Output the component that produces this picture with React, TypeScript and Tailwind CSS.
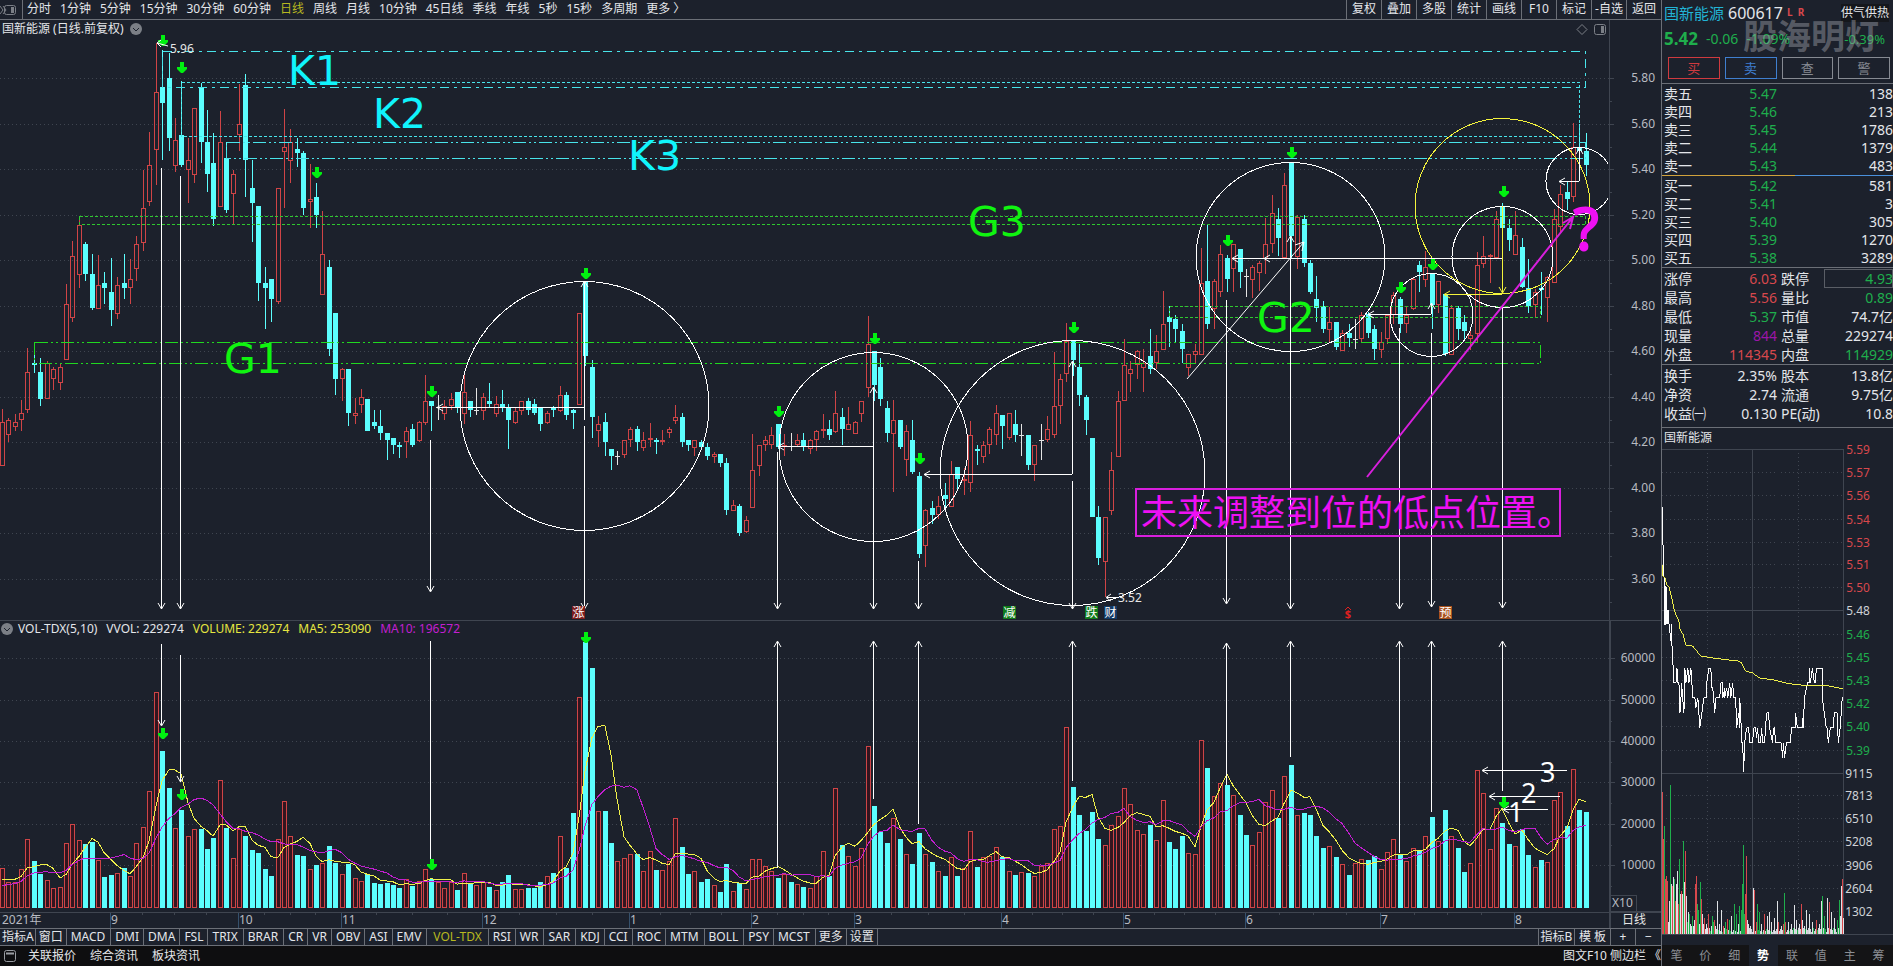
import React from "react";

/* One entry per trading day: kind, high, body top, body bottom, low, volume top.
   r = up, c = down, w / x = unchanged with an up / down volume bar. */
const DAYS = `
r409,422,466,466,868 r418,420,435,442,882 r414,422,427,431,882 r400,413,420,431,869 r348,372,410,413,839
c342,363,365,373,861 c358,372,399,406,874 r361,363,399,399,880 r367,369,379,390,888 r364,367,383,390,887
r284,304,360,360,843 r241,256,318,322,824 r217,225,275,288,840 c242,244,274,281,844 c254,274,308,310,842
r255,285,309,309,860 c272,283,288,304,877 c258,292,310,326,875 r277,285,314,319,873 c254,283,288,299,868
r259,279,288,304,876 r236,244,269,281,843 r170,208,243,251,827 r132,165,202,206,791 r43,92,150,185,692
c50,87,103,160,751 c53,78,138,151,788 r118,140,166,172,828 c81,135,165,167,810 r138,160,170,203,836
r108,108,175,183,829 c83,87,142,163,829 c110,142,174,192,849 c133,163,219,226,838 r111,142,207,207,780
c142,158,210,213,828 r170,174,194,224,858 r84,124,135,151,829 c74,85,160,197,836 c160,188,203,242,850
c206,206,283,301,853 c267,283,288,329,869 c279,279,299,322,876 r188,188,302,304,839 r109,147,152,208,801
r129,142,161,183,836 c138,149,153,167,855 c151,153,208,215,856 r164,199,202,228,869 c183,197,215,228,865
r211,254,295,295,863 c260,267,349,356,846 c313,313,379,395,863 r368,369,379,401,874 c369,369,413,426,864
r398,413,416,424,878 r389,397,405,413,881 c399,399,431,431,874 c410,422,426,429,883 c410,426,433,440,884
c433,433,440,460,883 c438,438,445,454,885 c442,445,447,458,888 r427,431,442,458,879 c424,429,445,447,886
r421,422,441,442,881 r375,401,423,425,869 c401,401,406,431,879 w395,407,408,420,882 r400,406,414,420,888
r393,399,406,410,882 c392,392,408,413,890 r374,392,414,424,873 c401,401,410,417,884 w388,410,411,415,885
r393,397,411,420,882 c383,401,404,407,887 r396,404,414,417,890 c390,404,407,412,882 c404,408,420,449,875
r408,411,423,424,889 r401,401,411,415,889 c398,401,410,415,888 c399,404,413,415,888 c408,408,424,431,882
r411,413,423,424,876 c406,407,410,417,873 r386,395,411,412,836 c392,395,415,420,868 c409,410,413,429,813
r313,313,405,405,697 c281,281,356,366,642 c360,367,417,438,668 r416,424,431,447,811 c413,422,442,456,811
c449,449,456,470,843 w451,456,457,465,861 r440,440,455,458,858 r427,429,440,447,854 c426,429,442,451,854
r432,440,448,451,871 r423,438,440,447,851 c438,440,442,454,870 r430,440,442,445,870 r427,429,433,438,861
r405,417,421,424,818 c413,417,442,447,847 c440,440,445,451,874 r440,440,448,456,871 c440,442,447,450,882
c443,447,456,460,879 r452,454,457,463,885 c454,454,463,467,892 c458,463,510,515,864 r500,505,511,511,891
c504,506,533,536,883 r516,520,532,533,889 r434,470,508,508,859 r445,445,466,476,859 r436,440,445,451,866
r427,435,445,449,871 c424,424,447,449,878 r434,445,447,456,874 x433,446,447,451,882 r434,440,445,447,884
c433,440,446,451,887 r439,440,449,454,888 r430,431,440,451,876 r414,429,431,438,851 c420,429,435,440,876
r391,413,432,433,788 c408,417,429,445,845 r407,424,430,430,856 r421,422,434,434,866 r401,401,414,422,848
r316,344,388,397,746 c351,351,385,401,806 c358,367,399,406,832 c401,408,433,442,843 r400,420,434,492,818
c420,420,447,449,839 r425,431,460,476,854 c420,440,472,474,864 c472,476,554,558,833 r509,510,546,567,854
c501,508,515,524,862 r496,506,515,519,871 c483,495,499,510,876 r461,474,507,507,857 c467,467,479,489,876
r468,479,481,495,868 r421,435,483,492,831 c445,449,451,465,867 r441,445,457,463,857 r427,429,445,454,856
r405,413,435,445,847 c415,415,426,449,857 r413,413,438,440,871 c410,424,435,442,875 w424,435,436,456,872
c435,435,465,470,873 r445,445,465,481,876 w424,440,441,460,866 r416,429,440,442,863 r352,406,435,438,829
r374,379,406,424,826 r323,341,374,382,727 c341,341,360,376,787 c344,367,395,406,815 c395,397,420,435,831
c438,438,517,517,812 c506,517,558,565,839 r517,517,562,597,845 r452,470,511,515,825 r391,401,457,457,816
r339,365,401,401,788 r361,369,374,392,804 r350,351,365,379,830 r349,363,368,392,834 c329,356,369,374,825
r335,351,363,369,840 r291,324,350,350,800 c306,317,322,347,842 c315,319,329,342,849 c324,331,349,363,836
r354,354,368,376,853 r344,351,355,364,854 r248,283,355,355,740 c225,281,324,329,768 r279,281,309,329,796
r245,254,292,297,783 c255,258,279,292,785 r244,244,269,292,795 c249,249,272,288,815 x269,276,277,297,835
r265,267,280,298,845 r261,263,273,291,832 r218,244,259,274,802 r195,213,244,253,790 c208,219,238,256,818
r173,185,258,258,776 c162,162,236,258,765 r215,217,257,269,815 c215,219,263,267,813 c260,263,292,294,815
c276,299,308,322,836 c301,306,329,333,848 r307,322,330,343,846 c322,322,347,350,857 r330,333,351,351,864
c324,333,338,347,875 w319,339,340,349,863 r312,315,339,342,859 c312,314,333,338,860 c325,329,349,360,856
r332,342,350,358,869 r315,315,339,344,852 r292,295,315,324,839 c297,299,324,333,854 r306,315,324,333,861
r278,279,309,310,848 c261,265,272,292,850 r251,267,280,287,836 c273,273,305,329,817 r281,281,305,313,841
c294,294,354,356,810 r305,308,355,355,836 c306,308,329,340,848 c315,322,331,340,872 r331,335,339,350,863
r252,265,334,343,770 r236,256,264,268,793 r254,255,257,283,849 r211,219,258,258,808 c203,206,228,244,823
c219,228,240,251,844 r211,235,255,255,846 c238,247,287,288,829 c259,288,306,313,855 r289,292,305,318,867
c272,288,290,315,860 r276,277,298,322,862 r209,219,283,283,800 r185,194,227,233,792 c182,192,199,210,826
r123,147,197,202,769 c124,147,151,163,810 c133,151,165,176,812`
  .trim()
  .split(/\s+/)
  .map((s, i) => {
    const [high, top, bottom, low, vol] = s.slice(1).split(",").map(Number);
    return { kind: s[0], x: Math.floor(2.3 + 6.413 * i), high, top, bottom, low, vol };
  });

const RED = "#cf4446";
const CYAN = "#5cfefe";
const GREEN = "#00f010";
const LINE = "#3f4550";
const VOL_BASE = 908;

const PRICE_TICKS = [
  [78, "5.80"], [124, "5.60"], [169, "5.40"], [215, "5.20"], [260, "5.00"], [306, "4.80"],
  [351, "4.60"], [397, "4.40"], [442, "4.20"], [488, "4.00"], [533, "3.80"], [579, "3.60"],
] as const;

const VOL_TICKS = [
  [658, "60000"], [700, "50000"], [741, "40000"], [782, "30000"], [824, "20000"], [865, "10000"],
] as const;

const MONTHS = [
  [110, "9"], [238, "10"], [341, "11"], [482, "12"], [629, "1"], [751, "2"],
  [854, "3"], [1001, "4"], [1123, "5"], [1245, "6"], [1380, "7"], [1514, "8"],
] as const;

function average(span: number) {
  const earlier = [892, 892, 892, 892, 892, 882, 882, 882, 882];
  const all = [...earlier, ...DAYS.map((d) => d.vol)];
  return DAYS.map((d, i) => {
    const end = i + earlier.length + 1;
    const slice = all.slice(end - span, end);
    return `${d.x},${(slice.reduce((a, b) => a + b, 0) / span).toFixed(1)}`;
  }).join(" ");
}

function Marker({ x, y }: { x: number; y: number }) {
  return <path d={`M${x - 2} ${y}h4v5h3v2l-4 4h-2l-4 -4v-2h3z`} fill={GREEN} />;
}

type Dir = "up" | "down" | "left";
function Head({ x, y, dir, color = "#fff" }: { x: number; y: number; dir: Dir; color?: string }) {
  const d =
    dir === "down" ? `M${x - 3.5} ${y - 6}L${x} ${y}L${x + 3.5} ${y - 6}`
    : dir === "up" ? `M${x - 3.5} ${y + 6}L${x} ${y}L${x + 3.5} ${y + 6}`
    : `M${x + 6} ${y - 3.5}L${x} ${y}L${x + 6} ${y + 3.5}`;
  return <path d={d} fill="none" stroke={color} />;
}

function Candles() {
  return (
    <g shapeRendering="crispEdges">
      {DAYS.map((d, i) => {
        const wick = d.kind === "r" ? RED : d.kind === "c" ? CYAN : "#e4e4e4";
        if (d.kind === "r")
          return (
            <g key={i} fill="none" stroke={RED}>
              <path d={`M${d.x + 0.5} ${d.high}V${d.top}M${d.x + 0.5} ${d.bottom}V${d.low}`} />
              <rect x={d.x - 1.5} y={d.top + 0.5} width={4} height={Math.max(1, d.bottom - d.top - 1)} />
            </g>
          );
        return (
          <g key={i} fill={wick}>
            <rect x={d.x} y={d.high} width={1} height={d.low - d.high} />
            <rect x={d.x - 2} y={d.top} width={5} height={Math.max(1, d.bottom - d.top)} />
          </g>
        );
      })}
    </g>
  );
}

const DOT_DASH = "13 3 2 3 2 3";

function PriceChart() {
  const cjk = "'Noto Sans','Noto Sans CJK SC',sans-serif";
  return (
    <svg viewBox="0 20 1661 601" className="block h-auto w-full" role="img" aria-label="日线图">
      <g shapeRendering="crispEdges">
        {PRICE_TICKS.map(([y]) => (
          <path key={y} d={`M0 ${y + 0.5}H1609`} stroke={LINE} strokeDasharray="1 3" />
        ))}
        {PRICE_TICKS.map(([y]) => (
          <path key={y} d={`M1609 ${y + 0.5}h5M1609 ${y + 23.5}h3`} stroke={LINE} />
        ))}
        <path d="M1609.5 20V620M0 620.5H1661" stroke={LINE} />
      </g>
      <g fill="#b8bbc1" fontSize={12} textAnchor="end">
        {PRICE_TICKS.map(([y, t]) => (
          <text key={t} x={1655} y={y + 4}>{t}</text>
        ))}
      </g>

      <Candles />

      <g fill="none" shapeRendering="crispEdges">
        <rect x={162.5} y={51.5} width={1423} height={36} stroke="#48e4ea" strokeDasharray="9 5 3 5" />
        <rect x={181.5} y={82.5} width={1398} height={54} stroke="#48e4ea" strokeDasharray="3 2" />
        <rect x={226.5} y={142.5} width={1359} height={16} stroke="#48e4ea" strokeDasharray={DOT_DASH} />
        <rect x={79.5} y={216.5} width={1506} height={8} stroke="#2fc92f" strokeDasharray="3 2" />
        <rect x={34.5} y={342.5} width={1506} height={21} stroke="#20d820" strokeDasharray={DOT_DASH} />
        <rect x={1169.5} y={306.5} width={371} height={11} stroke="#2fc92f" strokeDasharray="3 2" />
      </g>

      <g fill="none" stroke="#fff" shapeRendering="crispEdges">
        <circle cx={584.5} cy={406} r={124.5} />
        <circle cx={873.5} cy={447} r={94.5} />
        <circle cx={1072.5} cy={473} r={132.5} />
        <circle cx={1290.5} cy={257} r={94.5} />
        <circle cx={1431.5} cy={315} r={41.5} />
        <circle cx={1502.5} cy={257} r={50.5} />
        <path d="M1608 163.5A33.5 33.5 0 1 0 1608 198.500" />
        <circle cx={1502.5} cy={206} r={87.5} stroke="#f4f43c" />
        <path d="M161.5 168V609M180.5 176V609M430.5 440V591M584.5 281V420M584.5 426V608M777.5 452V608M873.5 387V609M918.5 561V609M1072.5 361V474M1072.5 481V609M1226.5 300V603M1290.5 236V609M1399.500 328V609M1431.5 303V314M1431.5 333V607M1502.5 306V608M1579.5 147V181" />
        <path d="M437 407.5H584M778 446.5H873M924 474.5H1072M1232 258.500H1502M1368 314.5H1431M1559 181.5H1579" />
        <path d="M1502.500 206V293M1444 294.500H1502" stroke="#f4f43c" />
      </g>
      <path d="M1187 379L1304 242M1295 245L1304 242L1302 251" fill="none" stroke="#fff" />
      {[[161, 609], [180, 609], [430, 592], [584, 609], [777, 609], [873, 609], [918, 609], [1072, 609],
        [1226, 604], [1290, 609], [1399, 609], [1431, 607], [1502, 608]].map(([x, y]) => (
        <Head key={x} x={x + 0.5} y={y} dir="down" />
      ))}
      {[[584, 281], [873, 387], [1072, 361], [1290, 236], [1431, 303], [1579, 148]].map(([x, y]) => (
        <Head key={x} x={x + 0.5} y={y} dir="up" />
      ))}
      {[[437, 407], [778, 446], [924, 474], [1232, 258], [1264, 258], [1368, 314], [1559, 181]].map(([x, y]) => (
        <Head key={x} x={x} y={y + 0.5} dir="left" />
      ))}
      <Head x={1444} y={294.5} dir="left" color="#f4f43c" />
      <Head x={1502.5} y={293} dir="down" color="#f4f43c" />

      {[[163, 35], [182, 62], [317, 167], [432, 386], [586, 268], [779, 406], [875, 333], [920, 453],
        [1074, 322], [1228, 235], [1292, 147], [1401, 282], [1433, 259], [1504, 186]].map(([x, y]) => (
        <Marker key={x} x={x} y={y} />
      ))}

      <g fontFamily="'DejaVu Sans',sans-serif" fontSize={41}>
        <g fill="#10f4fc">
          <text x={288} y={85}>K1</text>
          <text x={373} y={128}>K2</text>
          <text x={628} y={170}>K3</text>
        </g>
        <g fill="#10f410">
          <text x={224} y={373}>G1</text>
          <text x={968} y={236}>G3</text>
          <text x={1257} y={332}>G2</text>
        </g>
      </g>

      <g fill="none" stroke="#d81fdd" strokeWidth={2}>
        <path d="M1367 477L1573 217M1563 223L1573 217L1570 229" />
        <rect x={1136} y={489} width={424} height={47} />
      </g>
      <text x={1141} y={526} fontFamily={cjk} fontSize={36} fill="#ee10f2">未来调整到位的低点位置。</text>
      <text x={1586} y={250} fontFamily={cjk} fontSize={58} textAnchor="middle" fill="#ee10f2" stroke="#ee10f2" strokeWidth={2}>?</text>

      <path d="M168 46L157 43M161 40L157 43L161 47" fill="none" stroke="#fff" />
      <text x={170} y={53} fontSize={12} fill="#e6e6e6">5.96</text>
      <path d="M1118 597.500H1107M1111 594L1106 597.500L1111 601" fill="none" stroke="#fff" />
      <text x={1118} y={602} fontSize={12} fill="#e6e6e6">3.52</text>

      <g fontFamily={cjk} fontSize={12} textAnchor="middle" fill="#fff">
        {([[572, "#7c1c1c", "涨"], [1003, "#0f7a1a", "减"], [1085, "#0f7a1a", "跌"], [1104, "#123a66", "财"], [1439, "#a8501c", "预"]] as const).map(
          ([x, bg, t]) => (
            <g key={x}>
              <rect x={x} y={606} width={13} height={13} fill={bg} />
              <text x={x + 6.5} y={617}>{t}</text>
            </g>
          ),
        )}
        <text x={1348} y={618} fontSize={11} fontWeight={700} fill="#e02020">$</text>
      </g>
      <path d="M1345 610L1348 607L1351 610" fill="none" stroke="#e02020" />

      <g fill="none" stroke="#7b7f86">
        <path d="M1582 24.500L1587 29.500L1582 34.500L1577 29.500Z" />
        <rect x={1594.500} y={24.500} width={11} height={10} rx={2} />
        <rect x={1601} y={26} width={3} height={7} fill="#7b7f86" stroke="none" />
      </g>
    </svg>
  );
}

function VolumeChart() {
  return (
    <svg viewBox="0 621 1661 307" className="block h-auto w-full" role="img" aria-label="成交量">
      <g shapeRendering="crispEdges">
        {VOL_TICKS.map(([y]) => (
          <path key={y} d={`M0 ${y + 0.5}H1609`} stroke={LINE} strokeDasharray="1 3" />
        ))}
        {VOL_TICKS.map(([y]) => (
          <path key={y} d={`M1609 ${y + 0.5}h6M1609 ${y + 21.5}h3`} stroke={LINE} />
        ))}
        <path d="M1610 621V928M1611 912H1661" stroke={LINE} strokeWidth={2} />
        <path d="M0 912.500H1609M1611 895.500H1636.500V911" fill="none" stroke={LINE} />
        {MONTHS.map(([x], i) => {
          const next = MONTHS[i + 1]?.[0];
          return (
            <g key={x} stroke="#35506b">
              <path d={`M${x + 0.5} 913V928`} />
              {next && [1, 2, 3].map((k) => (
                <path key={k} d={`M${Math.round(x + ((next - x) * k) / 4) + 0.5} 913v2`} stroke={LINE} />
              ))}
            </g>
          );
        })}
        {DAYS.map((d, i) =>
          d.kind === "r" || d.kind === "w" ? (
            <rect key={i} x={d.x - 1.5} y={d.vol + 0.5} width={4} height={VOL_BASE - 1 - d.vol} fill="#33151f" stroke={RED} />
          ) : (
            <rect key={i} x={d.x - 2} y={d.vol} width={5} height={VOL_BASE - d.vol} fill={CYAN} />
          ),
        )}
        <polyline points={average(5)} fill="none" stroke="#f0f04a" />
        <polyline points={average(10)} fill="none" stroke="#c21fd0" />
      </g>

      <g fill="none" stroke="#fff" shapeRendering="crispEdges">
        <path d="M161.500 644V725M180.500 655V782M430.500 641V861M777.500 642V868M873.500 642V799M918.500 642V824M1072.500 642V781M1226.500 643V785M1290.500 642V757M1399.500 642V853M1431.500 642V812M1502.500 642V791" />
        <path d="M1483 770.500H1567M1490 796.500H1560M1504 809.500H1548" />
      </g>
      <Head x={161.5} y={726} dir="down" />
      <Head x={180.5} y={782} dir="down" />
      {[777, 873, 918, 1072, 1226, 1290, 1399, 1431, 1502].map((x) => (
        <Head key={x} x={x + 0.5} y={x === 1226 ? 643 : 641} dir="up" />
      ))}
      {[[1482, 770], [1489, 796], [1503, 809]].map(([x, y]) => (
        <Head key={x} x={x} y={y + 0.5} dir="left" />
      ))}
      {[[163, 728], [182, 789], [432, 859], [586, 632], [1504, 797]].map(([x, y]) => (
        <Marker key={x} x={x} y={y} />
      ))}
      <g fontSize={27} fill="#fff">
        <text x={1540} y={782}>3</text>
        <text x={1521} y={803}>2</text>
        <text x={1508} y={822}>1</text>
      </g>

      <g fontSize={12} fill="#b8bbc1">
        <g textAnchor="end">
          {VOL_TICKS.map(([y, t]) => (
            <text key={t} x={1655} y={y + 4}>{t}</text>
          ))}
        </g>
        <text x={1612} y={907}>X10</text>
        <text x={2} y={924}>2021年</text>
        {MONTHS.map(([x, t]) => (
          <text key={t} x={x + 1} y={924}>{t}</text>
        ))}
        <text x={1622} y={924} fill="#e6e6e6">日线</text>
      </g>
    </svg>
  );
}

function Expand() {
  return (
    <button aria-label="指标菜单" className="block">
      <svg viewBox="0 0 12 12" className="block size-3">
        <circle cx={6} cy={6} r={6} fill="#7b7f86" />
        <path d="M3 5L6 8L9 5" fill="none" stroke="#1c212c" />
      </svg>
    </button>
  );
}

const PERIODS = ["分时", "1分钟", "5分钟", "15分钟", "30分钟", "60分钟", "日线", "周线", "月线", "10分钟", "45日线", "季线", "年线", "5秒", "15秒", "多周期", "更多 〉"];
const TOOLS = ["复权", "叠加", "多股", "统计", "画线", "F10", "标记", "-自选", "返回"];

function Toolbar() {
  return (
    <header className="flex h-5 items-stretch border-b border-[#6b6f77] text-xs leading-4 text-[#e4e6ea]">
      <div className="flex w-[23px] items-center border-r border-[#6b6f77]">
        <svg viewBox="0 0 16 12" className="h-3 w-4" fill="none" stroke="#7b7f86">
          <path d="M0 2L3 6L0 10M3 2L6 6L3 10" />
          <rect x={4.5} y={1.500} width={11} height={9} rx={2} />
          <rect x={11} y={3} width={3} height={6} fill="#7b7f86" stroke="none" />
        </svg>
      </div>
      <nav className="flex flex-1 gap-[9px] overflow-hidden pb-[2px] pl-1 whitespace-nowrap">
        {PERIODS.map((p) => (
          <button key={p} className={p === "日线" ? "text-[#b8b820]" : ""}>{p}</button>
        ))}
      </nav>
      <div className="flex">
        {TOOLS.map((t) => (
          <button key={t} className="w-[35px] border-l border-[#6b6f77] pb-[2px] whitespace-nowrap">{t}</button>
        ))}
      </div>
    </header>
  );
}

const INDICATORS = ["指标A", "窗口", "MACD", "DMI", "DMA", "FSL", "TRIX", "BRAR", "CR", "VR", "OBV", "ASI", "EMV", "VOL-TDX", "RSI", "WR", "SAR", "KDJ", "CCI", "ROC", "MTM", "BOLL", "PSY", "MCST", "更多", "设置"];
const WIDE = ["MACD", "TRIX", "BRAR", "EMV", "WR", "SAR", "MTM", "BOLL", "MCST"];

function tabPadding(t: string) {
  if (t === "指标A") return "pl-[2px] pr-px";
  if (t === "窗口" || t === "更多" || t === "设置") return "px-[3px]";
  if (t === "VOL-TDX") return "px-[6px]";
  return WIDE.includes(t) ? "pl-1 pr-[5px]" : "px-1";
}

function IndicatorTabs() {
  return (
    <div className="flex h-[18px] items-stretch border-y border-[#6b6f77] text-xs leading-4 whitespace-nowrap text-[#e4e6ea]">
      <nav className="flex flex-1 overflow-hidden">
        {INDICATORS.map((t) => (
          <button key={t} className={`border-r border-[#6b6f77] ${tabPadding(t)} ${t === "VOL-TDX" ? "text-[#b8b820]" : ""}`}>
            {t}
          </button>
        ))}
      </nav>
      <button className="w-9 border-l border-[#6b6f77]">指标B</button>
      <button className="w-9 border-l border-[#6b6f77]">模 板</button>
      <button className="w-[25px] border-l border-[#6b6f77]">+</button>
      <button className="w-[26px] border-l border-[#6b6f77]">−</button>
    </div>
  );
}

const ASKS = [["卖五", "5.47", "138"], ["卖四", "5.46", "213"], ["卖三", "5.45", "1786"], ["卖二", "5.44", "1379"], ["卖一", "5.43", "483"]];
const BIDS = [["买一", "5.42", "581"], ["买二", "5.41", "3"], ["买三", "5.40", "305"], ["买四", "5.39", "1270"], ["买五", "5.38", "3289"]];

function Book({ rows }: { rows: string[][] }) {
  return (
    <table className="w-full table-fixed border-collapse">
      <tbody>
        {rows.map(([name, price, size]) => (
          <tr key={name} className="h-[18px]">
            <th scope="row" className="w-[50px] p-0 pl-[2px] text-left font-normal">{name}</th>
            <td className="w-[65px] p-0 text-right text-[#1fae4c]">{price}</td>
            <td className="p-0 text-right">{size}</td>
          </tr>
        ))}
      </tbody>
    </table>
  );
}

const UP = "text-[#d8484c]";
const DOWN = "text-[#1fae4c]";
const PLAIN = "";
const STATS = [
  ["涨停", "6.03", UP, "跌停", "4.93", DOWN],
  ["最高", "5.56", UP, "量比", "0.89", DOWN],
  ["最低", "5.37", DOWN, "市值", "74.7亿", PLAIN],
  ["现量", "844", "text-[#9b16a8]", "总量", "229274", PLAIN],
  ["外盘", "114345", UP, "内盘", "114929", DOWN],
];
const BASICS = [
  ["换手", "2.35%", PLAIN, "股本", "13.8亿", PLAIN],
  ["净资", "2.74", PLAIN, "流通", "9.75亿", PLAIN],
  ["收益㈠", "0.130", PLAIN, "PE(动)", "10.8", PLAIN],
];

function Stats({ rows }: { rows: string[][] }) {
  return (
    <table className="w-full table-fixed border-collapse">
      <tbody>
        {rows.map(([a, av, ac, b, bv, bc]) => (
          <tr key={a} className="h-[19px] whitespace-nowrap">
            <th scope="row" className="w-[50px] p-0 pl-[2px] text-left font-normal">{a}</th>
            <td className={`w-[65px] p-0 text-right ${ac}`}>{av}</td>
            <th scope="row" className="w-[47px] p-0 pl-1 text-left font-normal">{b}</th>
            <td className={`p-0 text-right ${bc} ${b === "跌停" ? "outline -outline-offset-1 outline-[#5a5e66]" : ""}`}>{bv}</td>
          </tr>
        ))}
      </tbody>
    </table>
  );
}

const TREND = "1662,507 1662,545 1663,577 1664,626 1665,587 1666,625 1667,611 1668,611 1668,625 1670,642 1671,625 1671,646 1673,684 1675,684 1676,669 1677,684 1678,684 1679,714 1681,684 1681,689 1683,714 1684,669 1685,684 1687,669 1688,684 1690,669 1691,684 1692,699 1694,699 1695,709 1697,699 1699,729 1701,714 1703,699 1706,699 1706,684 1708,669 1710,669 1711,689 1712,689 1714,714 1715,699 1719,699 1720,684 1722,684 1722,699 1724,689 1724,699 1726,689 1727,699 1729,684 1730,699 1732,684 1733,699 1735,699 1736,729 1738,714 1739,729 1739,699 1740,714 1741,744 1742,744 1743,773 1744,744 1746,729 1748,729 1749,744 1752,744 1753,729 1755,729 1756,739 1757,729 1758,744 1760,744 1761,729 1762,744 1764,744 1765,729 1766,714 1768,714 1769,729 1772,744 1773,729 1774,729 1775,744 1781,744 1782,759 1783,744 1784,759 1786,744 1790,744 1791,729 1795,729 1795,714 1797,729 1802,729 1803,714 1803,729 1804,699 1806,689 1807,684 1809,684 1809,669 1810,684 1812,669 1814,684 1815,684 1816,669 1822,669 1822,699 1824,714 1826,729 1827,729 1828,744 1830,729 1833,729 1834,714 1837,714 1838,744 1840,729 1842,699 1843,699";
const TREND_AVG = "1662,566 1662,577 1664,579 1666,586 1668,588 1671,599 1673,610 1676,618 1678,622 1679,630 1682,635 1685,646 1692,647 1695,651 1700,657 1706,658 1720,660 1738,662 1741,664 1745,672 1752,674 1759,679 1773,681 1785,684 1798,686 1828,687 1843,690";

/* Minute volumes: minute offset, height, colour. */
const MINUTES = "0r142 1r95 2g108 3r55 4r58 5r53 6w12 7w33 8g149 9w50 10r48 11w57 12g55 13r33 14w50 15w63 16r30 17g75 18w40 19r43 20w40 21g93 22w52 23r83 24w38 25g12 26w22 27g20 28w10 29w8 30g18 31w8 32w14 33r50 34r58 35g30 36g24 37w10 38g52 39r35 40w20 41w10 42r16 43w5 44w10 45w6 46r20 49w8 50g18 51g12 52r14 53w8 55w33 57w10 59w24 61r8 63g12 65r15 67g14 69w18 72g30 74g20 76w10 77g28 79g24 80g50 81g89 82g20 83r40 84r78 85w14 86w10 88w8 91w46 92r44 94r12 95g30 97g22 99w10 102r20 105w18 107w22 109w12 112w16 115w33 117r12 120w8 122r10 123g41 124r12 127w12 130w10 133w29 135w14 138w10 140r30 141w14 143w8 145w24 148w20 151w12 155r14 158w10 160w33 161g38 163g18 166w36 168r32 170w22 173w16 176g14 178g34 179w18 180w48 181r55 182w16"
  .split(" ")
  .map((s) => {
    const [, x, c, h] = /^(\d+)([rgw])(\d+)$/.exec(s)!;
    return { x: Number(x), h: Number(h), color: c === "r" ? "#d8484c" : c === "g" ? "#1fae4c" : "#dfe2e6" };
  });

const MINI_LABELS = ["5.59", "5.57", "5.56", "5.54", "5.53", "5.51", "5.50", "5.48", "5.46", "5.45", "5.43", "5.42", "5.40", "5.39", "9115", "7813", "6510", "5208", "3906", "2604", "1302"];

function MiniChart() {
  return (
    <svg viewBox="1661 440 232 504" className="block h-auto w-full" role="img" aria-label="分时走势">
      <g shapeRendering="crispEdges" fill="none" stroke={LINE}>
        {MINI_LABELS.map((t, i) => (
          <path key={t} d={`M1661 ${Math.round(449 + i * 23.2) + 0.5}H1843`} strokeDasharray={i % 7 === 0 ? undefined : "1 3"} />
        ))}
        <path d="M1661 936.500H1893M1751.500 449V936M1843.500 449V936" />
        <path d="M1706.500 449V936M1798.500 449V936" strokeDasharray="1 3" />
      </g>
      <g shapeRendering="crispEdges">
        {Array.from({ length: 183 }, (_, x) => (
          <rect key={x} x={1661 + x} y={936 - 2 - ((x * 7) % 5)} width={1} height={2 + ((x * 7) % 5)} fill={x % 4 ? "#cfd2d6" : "#1fae4c"} />
        ))}
        {MINUTES.map((m) => (
          <rect key={m.x} x={1661 + m.x} y={936 - m.h} width={1} height={m.h} fill={m.color} />
        ))}
        <polyline points={TREND} fill="none" stroke="#fff" />
        <polyline points={TREND_AVG} fill="none" stroke="#f0f04a" />
      </g>
      <g fontSize={12}>
        {MINI_LABELS.map((t, i) => (
          <text key={t} x={i < 14 ? 1846 : 1845} y={Math.round(449 + i * 23.2) + 5} fill={i < 7 ? "#d8484c" : i > 7 && i < 14 ? "#1fae4c" : "#cfd2d6"}>
            {t}
          </text>
        ))}
      </g>
    </svg>
  );
}

function QuotePanel() {
  const actions = [
    ["买", "border-[#cf3a3f] text-[#cf3a3f]"],
    ["卖", "border-[#3f7fd0] text-[#3f7fd0]"],
    ["查", "border-[#868a92] text-[#868a92]"],
    ["警", "border-[#868a92] text-[#868a92]"],
  ];
  return (
    <aside className="flex w-[232px] shrink-0 flex-col border-l border-[#6b6f77] text-sm leading-[18px] text-[#e4e6ea]">
      <div className="relative h-[84px] border-b border-[#6b6f77]">
        <div className="flex items-center pt-1 pr-1 pl-[2px] whitespace-nowrap">
          <h1 className="text-[15px] text-[#22b4d6]">国新能源</h1>
          <span className="ml-1 text-base leading-[18px]">600617</span>
          <span className="ml-1 self-start text-[10px] leading-4 font-bold text-[#d8484c]">L&nbsp;&nbsp;R</span>
          <span className="ml-auto bg-[#15171c] text-xs leading-[18px]">供气供热</span>
        </div>
        <div className="mt-2 flex items-center gap-2 pr-2 pl-[2px] whitespace-nowrap text-[#1fae4c]">
          <b className="text-[17px]">5.42</b>
          <span>-0.06</span>
          <span>-1.09%</span>
          <span className="ml-auto text-[13px]">-0.39%</span>
        </div>
        <div className="pointer-events-none absolute top-[18px] left-[81px] text-[34px] leading-9 font-bold whitespace-nowrap text-[#a0a3aa]/45">股海明灯</div>
        <div className="mt-[9px] grid grid-cols-4 gap-[5px] pr-[3px] pl-[6px]">
          {actions.map(([t, c]) => (
            <button key={t} className={`h-[22px] border text-[13px] leading-5 ${c}`}>{t}</button>
          ))}
        </div>
      </div>
      <div className="pt-px"><Book rows={ASKS} /></div>
      <div className="flex h-px">
        <div className="w-[133px] bg-[#d0a23c]" />
        <div className="flex-1 bg-[#4a90dc]" />
      </div>
      <div className="border-b border-[#6b6f77] pt-px"><Book rows={BIDS} /></div>
      <div className="border-b border-[#6b6f77] pt-px"><Stats rows={STATS} /></div>
      <div className="border-b border-[#6b6f77] pb-1 pt-px"><Stats rows={BASICS} /></div>
      <h2 className="h-3 pl-[2px] text-xs leading-5">国新能源</h2>
      <MiniChart />
      <nav className="mt-auto flex h-[21px] items-stretch bg-[#141416] text-xs text-[#8b8e94]">
        {["笔", "价", "细", "势", "联", "值", "主", "筹"].map((t) => (
          <button key={t} className={`flex-1 ${t === "势" ? "bg-[#1c212c] font-bold text-white" : ""}`}>{t}</button>
        ))}
      </nav>
    </aside>
  );
}

export default function App() {
  return (
    <div className="flex min-h-screen bg-[#1c212c] font-['Noto_Sans','Noto_Sans_CJK_SC',sans-serif]">
      <main className="flex min-w-0 flex-1 flex-col">
        <Toolbar />
        <section className="relative">
          <PriceChart />
          <div className="absolute top-px left-[2px] flex items-center gap-[6px] text-xs leading-4 text-[#e4e6ea]">
            <h2>国新能源 (日线.前复权)</h2>
            <Expand />
          </div>
        </section>
        <section className="relative">
          <VolumeChart />
          <div className="absolute top-0 left-px flex items-center gap-[9px] text-xs leading-4 text-[#e4e6ea]">
            <Expand />
            <span className="-ml-1">VOL-TDX(5,10)</span>
            <span>VVOL: 229274</span>
            <span className="text-[#e6e640]">VOLUME: 229274</span>
            <span className="text-[#e6e640]">MA5: 253090</span>
            <span className="text-[#c21fd0]">MA10: 196572</span>
          </div>
        </section>
        <IndicatorTabs />
        <footer className="flex flex-1 items-center bg-[#0e0e10] pl-1 text-xs leading-4 text-[#e4e6ea]">
          <svg viewBox="0 0 12 12" className="mr-3 size-3" fill="none" stroke="#9a9da3">
            <rect x={0.5} y={0.5} width={11} height={11} rx={2} />
            <path d="M2 3.500H10" strokeWidth={2} />
          </svg>
          <nav className="flex gap-[14px]">
            <button>关联报价</button>
            <button>综合资讯</button>
            <button>板块资讯</button>
          </nav>
          <div className="ml-auto flex gap-[3px]">
            <button>图文F10</button>
            <button>侧边栏 《</button>
          </div>
        </footer>
      </main>
      <QuotePanel />
    </div>
  );
}
